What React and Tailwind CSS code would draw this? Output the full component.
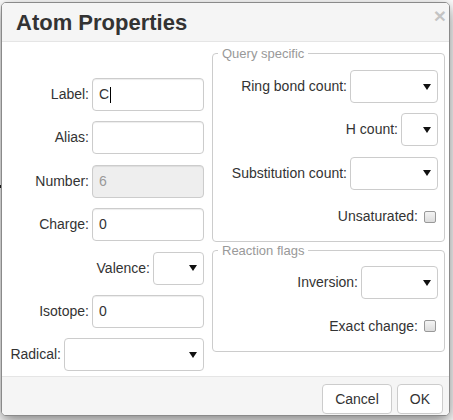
import React from 'react';

const font = { fontFamily: '"Liberation Sans", Arial, sans-serif' };

function TextInput({ value, disabled, w = 'w-[112px]' }) {
  return (
    <div
      className={`${w} h-[33px] border border-[#ccc] rounded-[4px] shadow-[inset_0_1px_1px_rgba(0,0,0,0.075)] flex items-center pl-[6px] text-[14px] ${disabled ? 'bg-[#eee] text-[#999]' : 'bg-white text-[#333]'}`}
    >
      {value}
    </div>
  );
}

function Select({ w }) {
  return (
    <div className={`${w} h-[33px] border border-[#ccc] rounded-[4px] bg-white flex items-center justify-end pr-[6px]`}>
      <svg width="8" height="6" viewBox="0 0 8 6">
        <path d="M0 0 L8 0 L4 6 Z" fill="#111" />
      </svg>
    </div>
  );
}

function Check() {
  return (
    <div className="w-[12px] h-[12px] rounded-[2px] border border-[#999] bg-gradient-to-b from-[#f4f4f4] to-[#dcdcdc]" />
  );
}

function Row({ label, children, pr = '' }) {
  return (
    <div className={`h-[33px] flex items-center justify-end gap-[3px] ${pr}`}>
      <span className="text-[14px] text-[#333]">{label}</span>
      {children}
    </div>
  );
}

export default function App() {
  return (
    <div className="relative w-[453px] h-[420px] bg-white overflow-hidden" style={font}>
      <div className="absolute left-0 top-[185px] w-[2px] h-[3px] bg-[#222]" />
      <div className="ml-[1px] mt-[2px] w-[449px] h-[414px] border border-[#8a8a8a] rounded-[5px] overflow-hidden flex flex-col shadow-[0_5px_15px_rgba(0,0,0,0.5)] relative bg-white">
        <div className="h-[39px] shrink-0 bg-[#f5f5f5] border-b border-[#e5e5e5] flex items-center pl-[14px] relative">
          <h3 className="text-[22px] font-bold text-[#333] leading-none pt-[2px]">Atom Properties</h3>
          <span className="absolute right-[3px] top-[2px] text-[21px] font-bold text-[#000] opacity-20 leading-none">×</span>
        </div>

        <div className="flex h-[334px] shrink-0">
          <div className="w-[202px] flex flex-col gap-[10.4px] pt-[36px]">
            <Row label="Label:">
              <div className="w-[112px] h-[33px] border border-[#ccc] rounded-[4px] bg-white flex items-center pl-[6px] text-[14px] text-[#333] shadow-[inset_0_1px_1px_rgba(0,0,0,0.075)]">
                C<span className="w-[1px] h-[16px] bg-black ml-[1px]" />
              </div>
            </Row>
            <Row label="Alias:"><TextInput value="" /></Row>
            <Row label="Number:"><TextInput value="6" disabled /></Row>
            <Row label="Charge:"><TextInput value="0" /></Row>
            <Row label="Valence:"><Select w="w-[51px]" /></Row>
            <Row label="Isotope:"><TextInput value="0" /></Row>
            <Row label="Radical:"><Select w="w-[140px]" /></Row>
          </div>

          <div className="ml-[8px] w-[233px] flex flex-col gap-[1px] pt-[4px]">
            <fieldset className="border border-[#ccc] rounded-[4px] pb-[8px]">
              <legend className="ml-[5px] px-[4px] text-[13px] text-[#999] leading-[15px]">Query specific</legend>
              <div className="flex flex-col gap-[10.4px] pt-[9px]">
                <Row label="Ring bond count:" pr="pr-[6px]"><Select w="w-[88px]" /></Row>
                <Row label="H count:" pr="pr-[6px]"><Select w="w-[37px]" /></Row>
                <Row label="Substitution count:" pr="pr-[6px]"><Select w="w-[88px]" /></Row>
                <Row label="Unsaturated:" pr="pr-[8px] gap-[6px]"><Check /></Row>
              </div>
            </fieldset>
            <fieldset className="border border-[#ccc] rounded-[4px] pb-[8px]">
              <legend className="ml-[5px] px-[4px] text-[13px] text-[#999] leading-[15px]">Reaction flags</legend>
              <div className="flex flex-col gap-[10.4px] pt-[8px]">
                <Row label="Inversion:" pr="pr-[6px]"><Select w="w-[77px]" /></Row>
                <Row label="Exact change:" pr="pr-[8px] gap-[6px]"><Check /></Row>
              </div>
            </fieldset>
          </div>
        </div>

        <div className="flex-1 bg-[#f5f5f5] border-t border-[#e5e5e5] flex justify-end items-start gap-[5px] pt-[7px] pr-[6px]">
          <button className="h-[30px] px-[12px] bg-white border border-[#ccc] rounded-[4px] text-[14px] text-[#333]">Cancel</button>
          <button className="h-[30px] px-[12px] bg-white border border-[#ccc] rounded-[4px] text-[14px] text-[#333]">OK</button>
        </div>
      </div>
    </div>
  );
}
